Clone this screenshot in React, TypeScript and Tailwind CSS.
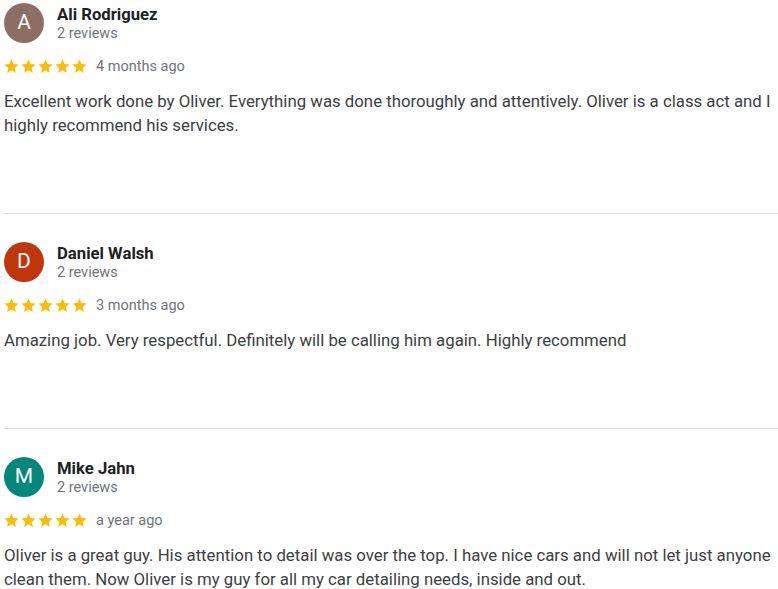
import React from 'react';

const reviews = [
  {
    name: 'Ali Rodriguez',
    initial: 'A',
    color: 'bg-[#8d6e63]',
    count: '2 reviews',
    time: '4 months ago',
    text: 'Excellent work done by Oliver. Everything was done thoroughly and attentively. Oliver is a class act and I highly recommend his services.',
  },
  {
    name: 'Daniel Walsh',
    initial: 'D',
    color: 'bg-[#bf360c]',
    count: '2 reviews',
    time: '3 months ago',
    text: 'Amazing job. Very respectful. Definitely will be calling him again. Highly recommend',
  },
  {
    name: 'Mike Jahn',
    initial: 'M',
    color: 'bg-[#00897b]',
    count: '2 reviews',
    time: 'a year ago',
    text: 'Oliver is a great guy. His attention to detail was over the top. I have nice cars and will not let just anyone clean them. Now Oliver is my guy for all my car detailing needs, inside and out.',
  },
];

const Star = () => (
  <svg viewBox="0 0 24 24" className="w-[17px] h-[17px]" fill="#fbbc04">
    <path d="M12 17.27L18.18 21l-1.64-7.03L22 9.24l-7.19-.61L12 2 9.19 8.63 2 9.24l5.46 4.73L5.82 21z" />
  </svg>
);

const App = () => {
  return (
    <div className="w-[778px] bg-white pt-[3px] pl-[4px] font-['Roboto',_'Liberation_Sans',_sans-serif]">
      {reviews.map((r, i) => (
        <div
          key={r.name}
          className={`${i > 0 ? 'pt-[28px]' : ''} ${i < reviews.length - 1 ? 'pb-[76px] border-b border-[#dadce0]' : ''}`}
        >
          <div className="flex items-start gap-[13px]">
            <div className={`w-[40px] h-[40px] rounded-full ${r.color} flex items-center justify-center text-white text-[21px]`}>
              {r.initial}
            </div>
            <div className="flex flex-col mt-[1px]">
              <span className="text-[16.7px] leading-[21px] font-bold text-[#202124]">{r.name}</span>
              <span className="text-[14.5px] leading-[18px] text-[#70757a]">{r.count}</span>
            </div>
          </div>
          <div className="flex items-center mt-[15px] h-[17px] -ml-[1px]">
            <div className="flex">
              <Star />
              <Star />
              <Star />
              <Star />
              <Star />
            </div>
            <span className="ml-[8px] text-[14.5px] text-[#70757a]">{r.time}</span>
          </div>
          <p className="mt-[14px] text-[16.8px] leading-[24px] text-[#3c4043] pr-[4px]">{r.text}</p>
        </div>
      ))}
    </div>
  );
};

export default App;
